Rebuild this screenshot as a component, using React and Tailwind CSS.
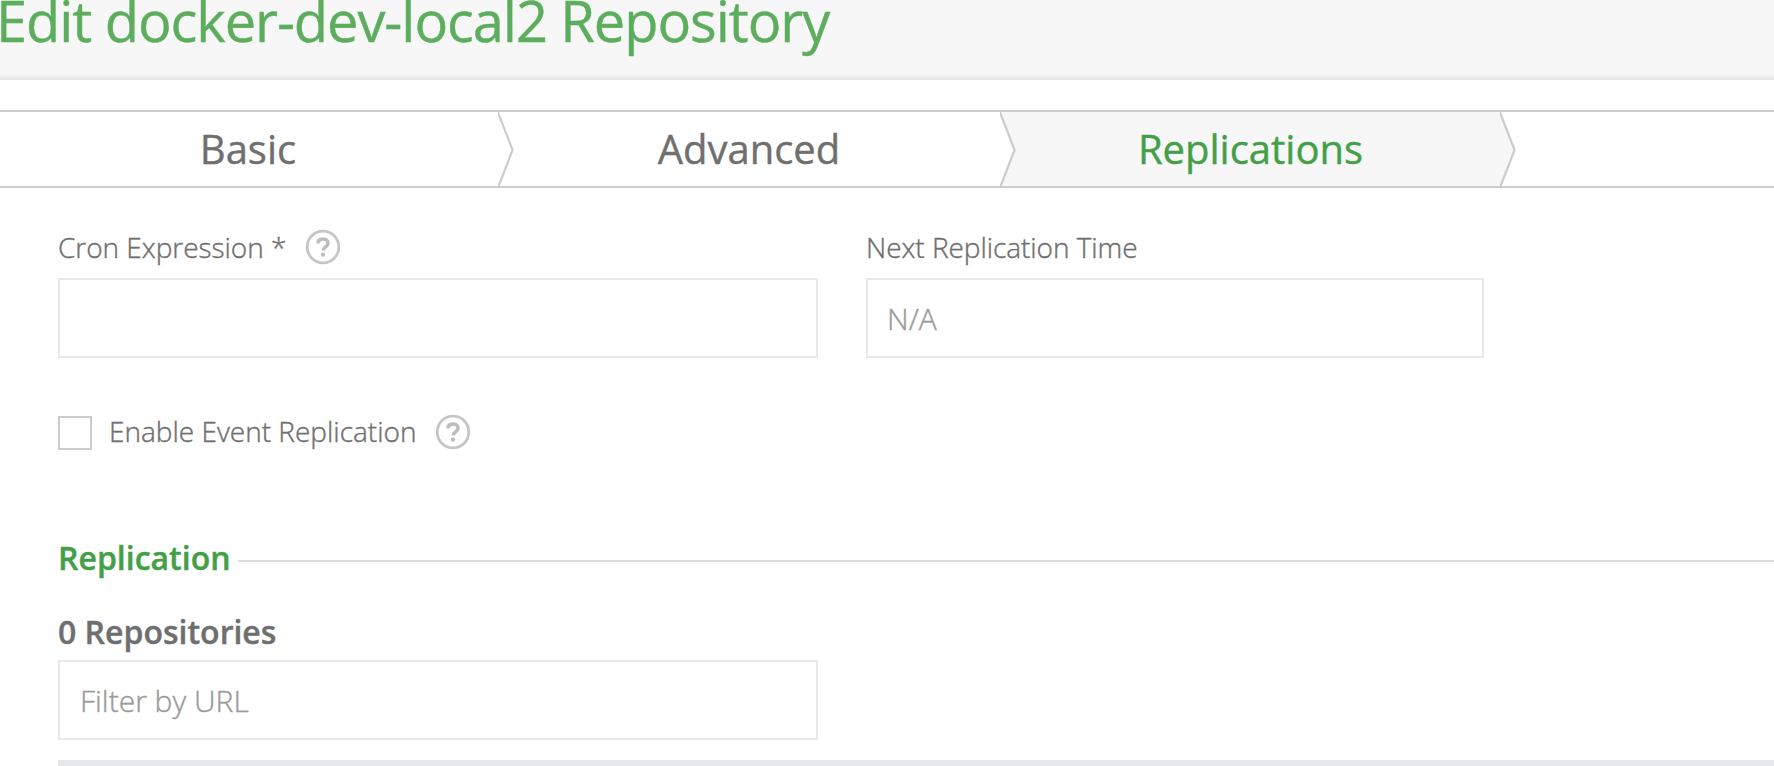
import React from "react";

function Help() {
  return (
    <svg width="36" height="36" viewBox="0 0 36 36" fill="none" className="shrink-0">
      <circle cx="18" cy="18" r="15.8" stroke="#c6c6c6" strokeWidth="2.8" />
      <path d="M13 14.4C13 11.6 15 10 18 10s5 1.700 5 4.200c0 3.600-4.800 3.700-4.800 7.300" stroke="#bdbdbd" strokeWidth="3.500" />
      <circle cx="18" cy="25.600" r="2.200" fill="#bdbdbd" />
    </svg>
  );
}

function Chevron({ fill }) {
  return (
    <svg width="18" height="78" viewBox="0 0 18 78" fill="none" className="absolute top-0 -right-[18px] z-10">
      <path d="M0 0L15 38L0 74Z" fill={fill} />
      <path d="M-0.200 0L14.600 38L-0.200 76" stroke="#cccccc" strokeWidth="2.2" />
    </svg>
  );
}

function Tab({ className, fill = "#ffffff", children }) {
  return (
    <div className={"relative h-[74px] text-center text-[40px] leading-[74px] " + className}>
      <span>{children}</span>
      <Chevron fill={fill} />
    </div>
  );
}

export default function App() {
  return (
    <div className="h-[766px] w-[1774px] overflow-hidden bg-white font-['Open_Sans',sans-serif] text-[#6f6f6f] [-webkit-text-stroke:0.4px]">
      <header className="h-20 bg-linear-to-b from-[#f7f7f7] from-92% to-[#e4e4e4]">
        <h1 className="-ml-1 h-10 whitespace-nowrap text-[56px] leading-10 tracking-[-1.06px] text-[#5cae5e]">
          Edit docker-dev-local2 Repository
        </h1>
      </header>
      <nav className="mt-[30px] flex h-[78px] border-y-2 border-[#cccccc]">
        <Tab className="w-[498px] pr-0.5">Basic</Tab>
        <Tab className="w-[502px]">Advanced</Tab>
        <Tab className="w-[500px] bg-[#f7f7f7] pl-px text-[#43a047]" fill="#f7f7f7">Replications</Tab>
      </nav>
      <main className="pl-[58px]">
        <div className="flex gap-12 pt-10">
          <div className="w-[760px]">
            <div className="flex h-[38px] items-center gap-[19px] text-[28px] font-light leading-[38px]">
              <label className="tracking-[-0.03px]">Cron Expression *</label>
              <Help />
            </div>
            <div className="mt-3 h-20 border-2 border-[#e8e8e8]" />
          </div>
          <div className="w-[618px]">
            <label className="block h-[38px] text-[28px] font-light leading-[38px] tracking-[-0.05px]">Next Replication Time</label>
            <div className="mt-3 h-20 border-2 border-[#e8e8e8] pl-[19px] text-[30px] font-light leading-[78px] text-[#9b9b9b]">N/A</div>
          </div>
        </div>
        <div className="mt-14 flex h-9 items-center text-[28px] font-light leading-9">
          <span className="mt-0.5 h-[34px] w-[34px] border-2 border-[#cccccc]" />
          <label className="-mt-0.5 ml-[17px]">Enable Event Replication</label>
          <span className="ml-[19px]"><Help /></span>
        </div>
        <div className="mt-[86px] flex h-11 items-center gap-[7px]">
          <h2 className="text-[32px] font-semibold leading-11 text-[#43a047]">Replication</h2>
          <span className="mt-1.5 h-0.5 flex-1 bg-[#dddddd]" />
        </div>
        <h3 className="mt-[30px] h-11 text-[32px] font-semibold leading-11">0 Repositories</h3>
        <div className="mt-1.5 h-20 w-[760px] border-2 border-[#e8e8e8] pl-5 text-[30px] font-light leading-[78px] text-[#9b9b9b]">Filter by URL</div>
        <div className="mt-5 h-1.5 bg-[#e4e8eb]" />
      </main>
    </div>
  );
}
